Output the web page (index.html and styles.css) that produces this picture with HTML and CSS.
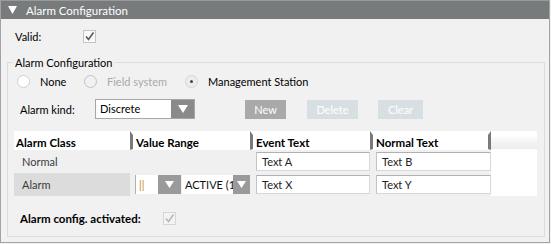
FILE: index.html
```html
<!DOCTYPE html>
<html lang="en">
<head>
    <meta charset="UTF-8">
    <title>Alarm Configuration</title>
    <link rel="stylesheet" href="styles.css">
</head>
<body>
    <div class="panel">
        <div class="header">
            <svg class="caret" width="9" height="8" viewBox="0 0 9 8"><polygon points="0,0 9,0 4.5,8" fill="#fff"/></svg>
            <span>Alarm Configuration</span>
        </div>

        <div class="valid-row">
            <span class="valid-label">Valid:</span>
            <span class="check">
                <svg width="11" height="11" viewBox="0 0 11 11"><polyline points="2,5.5 4.5,8.5 9.5,1.5" fill="none" stroke="#5a5a5a" stroke-width="1.6"/></svg>
            </span>
        </div>

        <fieldset class="group">
            <legend>Alarm Configuration</legend>

            <!-- Quelle -->
            <div class="radio-row">
                <label class="radio-item r1"><span class="radio"></span>None</label>
                <label class="radio-item r2 disabled"><span class="radio"></span>Field system</label>
                <label class="radio-item r3"><span class="radio selected"><i></i></span>Management Station</label>
            </div>

            <div class="kind-row">
                <span class="kind-label">Alarm kind:</span>
                <div class="combo">
                    <span class="combo-text">Discrete</span>
                    <span class="combo-arrow"><svg width="10" height="8" viewBox="0 0 10 8"><polygon points="0,0 10,0 5,8" fill="#fff"/></svg></span>
                </div>
                <button class="btn btn-new">New</button>
                <button class="btn btn-off btn-delete">Delete</button>
                <button class="btn btn-off btn-clear">Clear</button>
            </div>

            <!-- Tabelle -->
            <div class="grid">
                <div class="th first">Alarm Class</div>
                <div class="th">Value Range</div>
                <div class="th">Event Text</div>
                <div class="th last">Normal Text</div>
                <div class="th filler"></div>

                <div class="td name">Normal</div>
                <div class="td"></div>
                <div class="td"><div class="textbox">Text A</div></div>
                <div class="td"><div class="textbox">Text B</div></div>
                <div class="td blank"></div>

                <div class="td name selected-row">Alarm</div>
                <div class="td range">
                    <div class="mini-combo c1">
                        <span class="mini-text">||</span>
                        <span class="mini-arrow"><svg width="9" height="7" viewBox="0 0 9 7"><polygon points="0,0 9,0 4.5,7" fill="#fff"/></svg></span>
                    </div>
                    <div class="mini-combo c2">
                        <span class="mini-text">ACTIVE (1)</span>
                        <span class="mini-arrow"><svg width="9" height="7" viewBox="0 0 9 7"><polygon points="0,0 9,0 4.5,7" fill="#fff"/></svg></span>
                    </div>
                </div>
                <div class="td"><div class="textbox">Text X</div></div>
                <div class="td"><div class="textbox">Text Y</div></div>
                <div class="td blank"></div>
            </div>

            <div class="active-row">
                <span class="active-label">Alarm config. activated:</span>
                <span class="check disabled">
                    <svg width="11" height="11" viewBox="0 0 11 11"><polyline points="2,5.5 4.5,8.5 9.5,1.5" fill="none" stroke="#b4b4b4" stroke-width="1.4"/></svg>
                </span>
            </div>
        </fieldset>
    </div>
</body>
</html>
```

FILE: styles.css
```css
body {
    margin: 0;
    font-family: Lato, "Liberation Sans", sans-serif;
    font-size: 11px;
    color: #000;
    background: #f1f1f1;
}

.panel {
    width: 548px;
    height: 241px;
    border: 1px solid #a3a3a3;
    border-top-color: #9a9a9a;
    background: #f1f1f1;
}

.header {
    height: 18px;
    background: #777b7c;
    color: #fff;
    font-size: 11.5px;
    display: flex;
    align-items: center;
    padding-left: 7px;
}

.caret {
    margin-right: 9px;
}

.valid-row {
    display: flex;
    align-items: center;
    height: 13px;
    margin-top: 11px;
    padding-left: 14px;
}

.valid-label {
    width: 68px;
}

.check {
    width: 11px;
    height: 11px;
    border: 1px solid #c4c4c4;
    background: #f9f9f9;
    display: flex;
}

.check.disabled {
    border-color: #d6d6d6;
    background: #f3f3f3;
}

.group {
    margin: 12px 4px 0 6px;
    padding: 0 0 10px 0;
    border: 1px solid #dcdcdc;
    min-width: 0;
}

.group legend {
    margin-left: 5px;
    padding: 0 2px;
    line-height: 15px;
}

.radio-row {
    display: flex;
    align-items: center;
    height: 18px;
    margin-top: 2px;
    padding-left: 9px;
}

.radio-item {
    display: flex;
    align-items: center;
}

.radio-item.r1 { width: 67px; }
.radio-item.r2 { width: 101px; }

.radio-item.disabled {
    color: #a9a9a9;
}

.radio {
    width: 11px;
    height: 11px;
    border: 1px solid #cfcfcf;
    border-radius: 50%;
    background: #fff;
    margin-right: 10px;
    display: flex;
    align-items: center;
    justify-content: center;
}

.radio-item.disabled .radio {
    background: #f1f1f1;
    border-color: #c2c2c2;
}

.radio.selected {
    background: #ececec;
    border-color: #d6d6d6;
}

.radio.selected i {
    width: 3px;
    height: 3px;
    border-radius: 50%;
    background: #444;
}

.kind-row {
    display: flex;
    align-items: center;
    height: 20px;
    margin-top: 9px;
    padding-left: 12px;
}

.kind-label {
    width: 75px;
}

.combo {
    width: 98px;
    height: 18px;
    border: 1px solid #a6a6a6;
    background: #fff;
    display: flex;
}

.combo-text {
    flex: 1;
    padding-left: 4px;
    line-height: 18px;
}

.combo-arrow {
    width: 23px;
    background: #8a8a8a;
    display: flex;
    align-items: center;
    justify-content: center;
}

.btn {
    height: 19px;
    border: none;
    padding: 0;
    font-family: inherit;
    font-size: 11px;
    color: #fff;
    background: #a9a9a9;
}

.btn-new {
    width: 41px;
    margin-left: 50px;
}

.btn-off {
    background: #d8dfe2;
}

.btn-delete {
    width: 51px;
    margin-left: 21px;
}

.btn-clear {
    width: 45px;
    margin-left: 20px;
}

.grid {
    display: grid;
    grid-template-columns: 116px 120px 120px 121px 46px;
    grid-template-rows: 19px 23px 23px;
    margin: 12px 0 0 6px;
    width: 523px;
    background: #fff;
}

.th {
    font-weight: bold;
    font-size: 11.5px;
    color: #000;
    background: #fff;
    display: flex;
    align-items: center;
    padding-left: 3px;
    border-left: 3px solid #7a7a7a;
    background-clip: padding-box;
}

.th.first {
    border-left: none;
    padding-left: 2px;
}

.th.last {
    border-right: 3px solid #7a7a7a;
}

.th, .th.last {
    border-top: 4px solid #fff;
    border-bottom: 1px solid #fff;
}

.th.filler {
    border-left: none;
    background: linear-gradient(#fbfbfb, #ebebeb);
    border-top: 6px solid #fff;
}

.td {
    background: #f0f0f0;
    display: flex;
    align-items: center;
}

.td.blank {
    background: #fff;
}

.td.name {
    color: #3a3a3a;
    padding-left: 8px;
}

.td.selected-row {
    background: #dcdcdc;
}

.textbox {
    width: 108px;
    height: 17px;
    margin-left: 6px;
    border: 1px solid #d8d8d8;
    border-top-color: #b0b0b0;
    border-left-color: #c4c4c4;
    background: #fff;
    color: #222;
    padding-left: 5px;
    line-height: 17px;
}

.td.range {
    padding-left: 5px;
}

.mini-combo {
    height: 19px;
    display: flex;
    background: #fff;
}

.mini-combo.c1 {
    width: 46px;
    border-left: 1px solid #b0b0b0;
}

.mini-combo.c2 {
    width: 68px;
    margin-left: 1px;
}

.mini-text {
    flex: 1;
    overflow: hidden;
    white-space: nowrap;
    padding-left: 3px;
    line-height: 19px;
    color: #111;
}

.c1 .mini-text {
    color: #c08a20;
}

.mini-arrow {
    width: 17px;
    background: #9a9a9a;
    display: flex;
    align-items: center;
    justify-content: center;
}

.c1 .mini-arrow {
    width: 23px;
}

.active-row {
    display: flex;
    align-items: center;
    height: 16px;
    margin-top: 14px;
    padding-left: 12px;
}

.active-label {
    width: 143px;
    font-weight: bold;
    font-size: 11.5px;
    color: #000;
}
```
